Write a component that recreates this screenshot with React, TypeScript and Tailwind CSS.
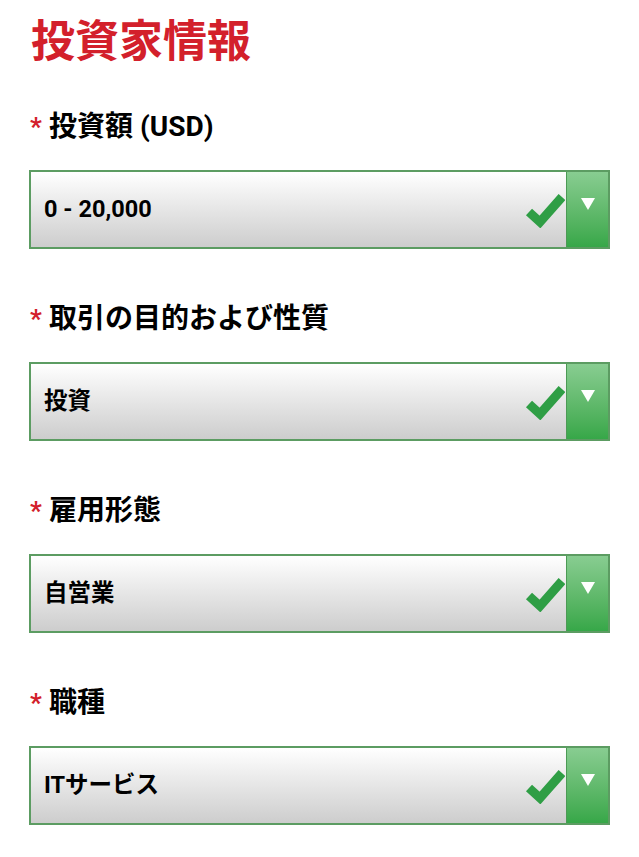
const fields = [
  { label: '投資額 (USD)', value: '0 - 20,000' },
  { label: '取引の目的および性質', value: '投資' },
  { label: '雇用形態', value: '自営業' },
  { label: '職種', value: 'ITサービス' },
];

const font = { fontFamily: 'Roboto, "Noto Sans CJK JP", sans-serif' };

function Check() {
  return (
    <svg width="40" height="36" viewBox="0 0 40 36" className="shrink-0">
      <path
        d="M4 20 L15 30 L37 5"
        fill="none"
        stroke="#2f9e45"
        strokeWidth="9"
        strokeLinejoin="miter"
        strokeLinecap="butt"
      />
    </svg>
  );
}

function SelectBox({ value }: { value: string }) {
  return (
    <div className="flex h-[79px] border-2 border-[#5c9c62] bg-gradient-to-b from-white to-[#cdcdcd]">
      <div className="flex-1 flex items-center pl-[13px] text-[23.5px] font-bold text-black">{value}</div>
      <div className="flex items-center pr-[1px]">
        <Check />
      </div>
      <div className="w-[42px] border-l border-[#4c9a55] bg-gradient-to-b from-[#88cd91] to-[#36a748] flex justify-center pt-[26px]">
        <svg width="14" height="12" viewBox="0 0 14 12">
          <path d="M0 0 H14 L7 12 Z" fill="#fff" />
        </svg>
      </div>
    </div>
  );
}

export default function App() {
  return (
    <div className="bg-white min-h-screen w-[639px] pl-[29px] pr-[29px] pt-[17px]" style={font}>
      <h1 className="text-[44px] leading-[50px] font-bold text-[#d3202b] pl-[2px] mb-[44px]">投資家情報</h1>
      {fields.map((f) => (
        <div key={f.label} className="mb-[54px]">
          <div className="flex items-start h-[32px] mb-[27px] pl-[1px]">
            <span className="text-[#d3202b] text-[26px] leading-[32px] font-bold w-[19px]">*</span>
            <span className="text-[28px] leading-[32px] font-bold text-black">{f.label}</span>
          </div>
          <SelectBox value={f.value} />
        </div>
      ))}
    </div>
  );
}
